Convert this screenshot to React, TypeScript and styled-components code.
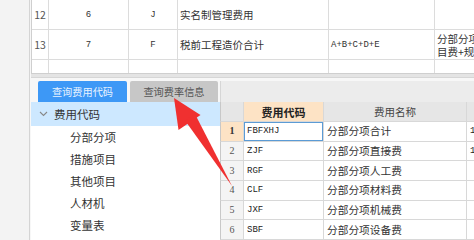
import React from "react";
import styled, { createGlobalStyle } from "styled-components";

const Global = createGlobalStyle`
  html, body { margin: 0; padding: 0; }
  body {
    width: 474px; height: 240px; overflow: hidden; background: #f7f7f7;
    font-family: "Noto Sans CJK SC", "Noto Sans", sans-serif; color: #333;
  }
`;

const Page = styled.div`
  position: relative;
  display: flex;
  width: 474px;
  height: 240px;
  overflow: hidden;
`;

const LeftStrip = styled.div`
  width: 29px;
  flex: none;
  background: #f3f3f3;
  border-right: 1px solid #d4d4d4;
`;

const Main = styled.div`
  flex: 1;
  display: flex;
  flex-direction: column;
  min-width: 0;
  padding-left: 1px;
`;

const TopTable = styled.div`
  height: 73px;
  background: #fff;
  border-left: 1px solid #cfcfcf;
  border-bottom: 1px solid #cfcfcf;
  overflow: hidden;
`;

const TRow = styled.div<{ $h: number }>`
  display: grid;
  grid-template-columns: 17px 80px 49px 151px 106px 60px;
  height: ${p => p.$h}px;
  border-bottom: 1px solid #dcdcdc;
`;

const TCell = styled.div<{ $align?: string; $mono?: boolean; $muted?: boolean }>`
  border-right: 1px solid #dcdcdc;
  display: flex;
  align-items: center;
  justify-content: ${p => p.$align || "flex-start"};
  padding-left: ${p => (p.$align ? 0 : 2)}px;
  font-size: ${p => (p.$mono ? 9 : 10.5)}px;
  font-family: ${p => (p.$mono ? '"Liberation Mono", monospace' : '"Noto Sans CJK SC", sans-serif')};
  color: ${p => (p.$muted ? "#555" : "#333")};
  line-height: 12px;
  white-space: nowrap;
  overflow: hidden;
`;

const Lines = styled.span`
  display: block;
  line-height: 13px;
  white-space: pre;
`;

const Sep = styled.div`
  height: 3px;
  border-bottom: 1px solid #d6d6d6;
  background: #e4e4e4;
`;

const Lower = styled.div`
  flex: 1;
  display: flex;
  min-height: 0;
`;

const LeftCol = styled.div`
  width: 189px;
  flex: none;
  display: flex;
  flex-direction: column;
`;

const Tabs = styled.div`
  display: flex;
  gap: 3px;
  padding: 3px 0 0 7px;
  height: 21px;
`;

const Tab = styled.div<{ $active?: boolean }>`
  width: ${p => (p.$active ? 89 : 88)}px;
  height: 21px;
  display: flex;
  align-items: center;
  justify-content: center;
  font-size: 10.2px;
  background: ${p => (p.$active ? "#3d98f6" : "#c7c7c7")};
  color: ${p => (p.$active ? "#e8f3ff" : "#555")};
  border-radius: 2px 2px 0 0;
`;

const Tree = styled.div`
  flex: 1;
  background: #fff;
  display: flex;
  flex-direction: column;
`;

const TreeHead = styled.div`
  height: 24px;
  background: #cde8ff;
  display: flex;
  align-items: center;
  padding-left: 8px;
  font-size: 11.5px;
  color: #333;
  gap: 6px;
`;

const TreeItem = styled.div`
  height: 22px;
  display: flex;
  align-items: center;
  padding-left: 39px;
  font-size: 11.5px;
  color: #333;
`;

const RightCol = styled.div`
  flex: 1;
  display: flex;
  flex-direction: column;
  padding-top: 3px;
  min-width: 0;
`;

const Band = styled.div`
  height: 23px;
  background: #ececec;
  border-left: 1px solid #d6d6d6;
`;

const GRow = styled.div<{ $head?: boolean }>`
  display: grid;
  grid-template-columns: 23px 80px 143px 40px;
  height: 20px;
  border-bottom: 1px solid #d8d8d8;
  background: ${p => (p.$head ? "#e6e6e6" : "#fff")};
  border-left: 1px solid #c8c8c8;
`;

const GCell = styled.div<{ $kind?: "num" | "code" | "name" | "head" | "headSel" | "numSel" | "sel" }>`
  border-right: 1px solid #d8d8d8;
  display: flex;
  align-items: center;
  white-space: nowrap;
  overflow: hidden;
  line-height: 12px;
  ${p => {
    switch (p.$kind) {
      case "num":
        return `justify-content:center; font-size:10px; color:#555; background:#f4f4f4; font-family:"Liberation Serif", serif;`;
      case "numSel":
        return `justify-content:center; font-size:10px; font-weight:bold; color:#333; background:#fde3c5; font-family:"Liberation Serif", serif;`;
      case "headSel":
        return `justify-content:center; font-size:11px; font-weight:bold; color:#222; background:#fde3c5;`;
      case "head":
        return `justify-content:center; font-size:10.5px; color:#444;`;
      case "code":
        return `padding-left:3px; font-size:9px; font-family:"Liberation Mono", monospace; color:#222;`;
      case "sel":
        return `padding-left:3px; font-size:9px; font-family:"Liberation Mono", monospace; color:#222; box-shadow: inset 0 0 0 1px #5b9bd5;`;
      default:
        return `padding-left:3px; font-size:10.7px; color:#333;`;
    }
  }}
`;

const Arrow = styled.svg`
  position: absolute;
  left: 0;
  top: 0;
  pointer-events: none;
`;

const rows = [
  ["ZJF", "分部分项直接费"],
  ["RGF", "分部分项人工费"],
  ["CLF", "分部分项材料费"],
  ["JXF", "分部分项机械费"],
  ["SBF", "分部分项设备费"],
];

export default function App() {
  return (
    <>
      <Global />
      <Page>
        <LeftStrip />
        <Main>
          <TopTable>
            <TRow $h={29}>
              <TCell $align="center" $muted>12</TCell>
              <TCell $align="center" $mono>6</TCell>
              <TCell $align="center" $mono>J</TCell>
              <TCell>实名制管理费用</TCell>
              <TCell />
              <TCell />
            </TRow>
            <TRow $h={29}>
              <TCell $align="center" $muted>13</TCell>
              <TCell $align="center" $mono>7</TCell>
              <TCell $align="center" $mono>F</TCell>
              <TCell>税前工程造价合计</TCell>
              <TCell $mono>A+B+C+D+E</TCell>
              <TCell><Lines>{"分部分项\n目费+规"}</Lines></TCell>
            </TRow>
            <TRow $h={15}>
              <TCell /><TCell /><TCell /><TCell /><TCell /><TCell />
            </TRow>
          </TopTable>
          <Sep />
          <Lower>
            <LeftCol>
              <Tabs>
                <Tab $active>查询费用代码</Tab>
                <Tab>查询费率信息</Tab>
              </Tabs>
              <Tree>
                <TreeHead>
                  <svg width="9" height="6" viewBox="0 0 9 6">
                    <path d="M1 1 L4.5 4.5 L8 1" fill="none" stroke="#888" strokeWidth="1.1" />
                  </svg>
                  费用代码
                </TreeHead>
                <TreeItem>分部分项</TreeItem>
                <TreeItem>措施项目</TreeItem>
                <TreeItem>其他项目</TreeItem>
                <TreeItem>人材机</TreeItem>
                <TreeItem>变量表</TreeItem>
              </Tree>
            </LeftCol>
            <RightCol>
              <Band />
              <GRow $head>
                <GCell $kind="head" />
                <GCell $kind="headSel">费用代码</GCell>
                <GCell $kind="head">费用名称</GCell>
                <GCell $kind="head" />
              </GRow>
              <GRow>
                <GCell $kind="numSel">1</GCell>
                <GCell $kind="sel">FBFXHJ</GCell>
                <GCell $kind="name">分部分项合计</GCell>
                <GCell $kind="code">1</GCell>
              </GRow>
              {rows.map(([c, n], i) => (
                <GRow key={c}>
                  <GCell $kind="num">{i + 2}</GCell>
                  <GCell $kind="code">{c}</GCell>
                  <GCell $kind="name">{n}</GCell>
                  <GCell $kind="code">{i === 0 ? "1" : ""}</GCell>
                </GRow>
              ))}
            </RightCol>
          </Lower>
        </Main>
        <Arrow width="474" height="240" viewBox="0 0 474 240">
          <polygon points="174,98 178.5,130 200.5,115" fill="#f03030" />
          <polygon points="185,120.5 195,114 232,186" fill="#f03030" />
        </Arrow>
      </Page>
    </>
  );
}
